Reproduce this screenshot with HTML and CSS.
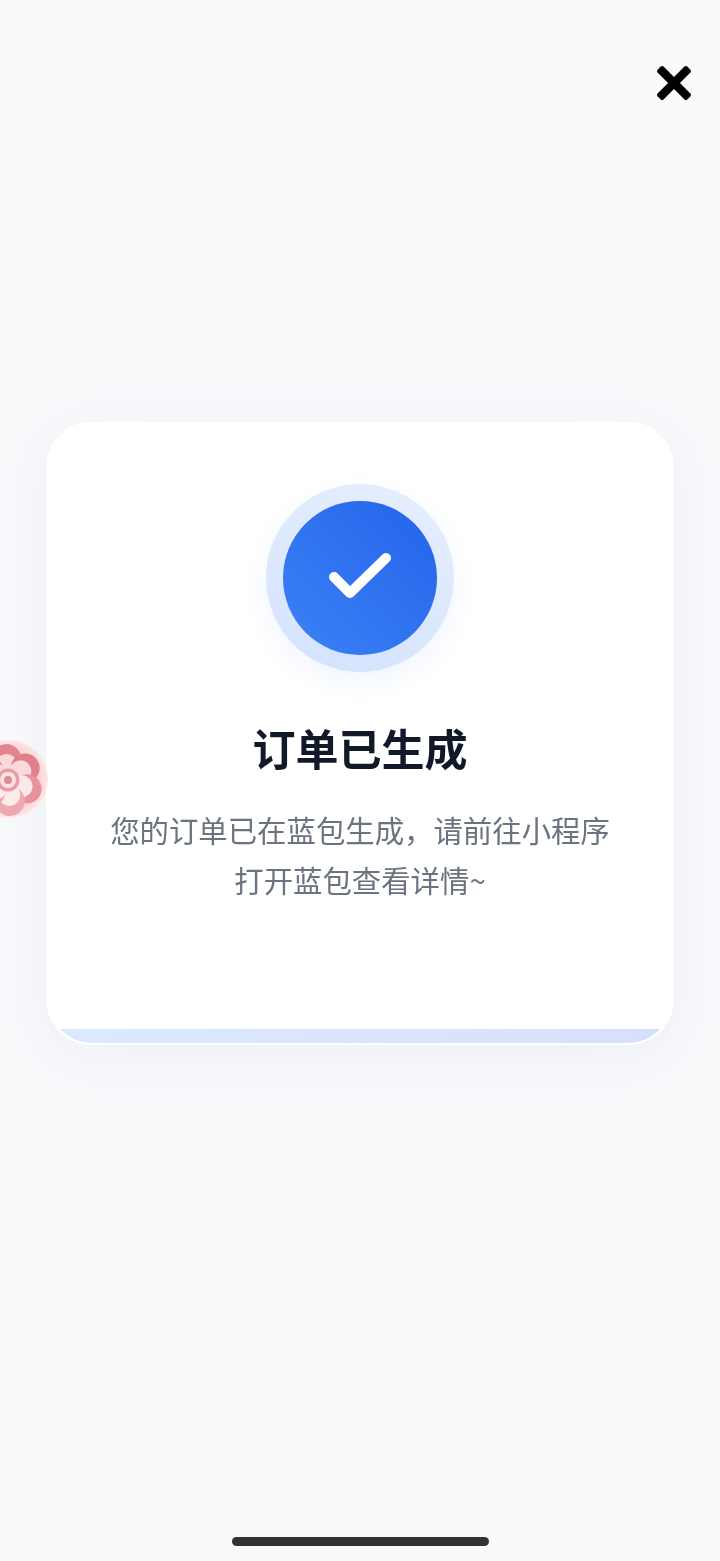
FILE: index.html
```html
<!DOCTYPE html>
<html lang="zh-CN">
<head>
    <meta charset="UTF-8">
    <meta name="viewport" content="width=device-width, initial-scale=1.0">
    <title>订单已生成</title>
    <link rel="stylesheet" href="styles.css">
</head>
<body>

    <div class="page">
        <div class="topbar">
            <svg class="close-icon" viewBox="0 0 36 36" width="36" height="36">
                <g transform="translate(18 18)">
                    <rect x="-21" y="-4.2" width="42" height="8.4" rx="2" transform="rotate(45)"/>
                    <rect x="-21" y="-4.2" width="42" height="8.4" rx="2" transform="rotate(-45)"/>
                </g>
            </svg>
        </div>

        <div class="card">
            <div class="status">
                <div class="status__circle">
                    <svg viewBox="0 0 64 50" width="64" height="50">
                        <path d="M6 24 L22 40 L58 5" fill="none" stroke="#fff" stroke-width="10" stroke-linecap="round" stroke-linejoin="round"/>
                    </svg>
                </div>
            </div>
            <h2 class="card__title">订单已生成</h2>
            <p class="card__text">您的订单已在蓝包生成，请前往小程序<br>打开蓝包查看详情~</p>
            <div class="card__footer"></div>
        </div>

        <div class="home-bar"></div>

        <!-- floating flower button on the left edge -->
        <div class="float-flower">
            <svg viewBox="0 0 78 78" width="78" height="78">
                <defs>
                    <radialGradient id="flowerBg">
                        <stop offset="0.7" stop-color="#fbcfd2"/>
                        <stop offset="1" stop-color="#fde6e7"/>
                    </radialGradient>
                </defs>
                <circle cx="39" cy="39" r="39" fill="url(#flowerBg)"/>
                <g transform="translate(38 40)">
                    <g transform="rotate(-5)"><circle cy="-21" r="15" fill="#e2858f"/><circle cy="-15" r="11" fill="#fbd8da"/></g>
                    <g transform="rotate(55)"><circle cy="-21" r="14.5" fill="#e0808c"/><circle cy="-15" r="11" fill="#fbd8da"/></g>
                    <g transform="rotate(115)"><circle cy="-21" r="14.5" fill="#e8929b"/><circle cy="-15" r="11" fill="#fde8e9"/></g>
                    <g transform="rotate(175)"><circle cy="-21" r="15" fill="#eca9b1"/><circle cy="-15" r="11" fill="#fdeaeb"/></g>
                    <g transform="rotate(235)"><circle cy="-21" r="14.5" fill="#eca9b1"/><circle cy="-15" r="11" fill="#fdeaeb"/></g>
                    <g transform="rotate(295)"><circle cy="-21" r="14.5" fill="#e2858f"/><circle cy="-15" r="11" fill="#fbd8da"/></g>
                    <circle r="11.5" fill="#e89ea7"/>
                    <circle r="8" fill="#fbe3e4"/>
                    <circle r="4" fill="#e08a94"/>
                </g>
            </svg>
        </div>
    </div>

</body>
</html>
```

FILE: styles.css
```css
* {
    margin: 0;
    padding: 0;
    box-sizing: border-box;
}

html, body {
    height: 100%;
}

body {
    background: #f9fafc;
    font-family: "Noto Sans CJK SC", "Noto Sans", sans-serif;
    overflow: hidden;
}

.page {
    position: relative;
    display: flex;
    flex-direction: column;
    height: 1561px;
    padding: 0 46px;
}

.topbar {
    display: flex;
    justify-content: flex-end;
    height: 422px;
    padding-top: 65px;
    margin-right: -18px;
}

.close-icon {
    display: block;
}

.card {
    position: relative;
    display: flex;
    flex-direction: column;
    align-items: center;
    height: 623px;
    padding-top: 60px;
    background: #fff;
    border: 2px solid #fff;
    border-radius: 46px;
    overflow: hidden;
    filter: drop-shadow(0 10px 30px rgba(30, 50, 90, 0.06));
}

.status {
    display: flex;
    align-items: center;
    justify-content: center;
    width: 188px;
    height: 188px;
    border-radius: 50%;
    background: linear-gradient(20deg, #d3e2fd, #e6effe);
    box-shadow: 0 10px 24px rgba(59, 130, 246, 0.08);
}

.status__circle {
    display: flex;
    align-items: center;
    justify-content: center;
    width: 154px;
    height: 154px;
    border-radius: 50%;
    background: linear-gradient(45deg, #3b82f6, #2563eb);
}

.card__title {
    margin-top: 44px;
    font-size: 43px;
    line-height: 62px;
    font-weight: 700;
    color: #111827;
}

.card__text {
    margin-top: 26px;
    font-size: 29.4px;
    line-height: 50px;
    text-align: center;
    color: #6b7280;
}

.card__footer {
    position: absolute;
    left: 0;
    right: 0;
    bottom: 0;
    height: 14px;
    background: linear-gradient(90deg, #dbeafe, #d6e0fb);
}

.home-bar {
    width: 257px;
    height: 9px;
    margin: auto auto 15px;
    border-radius: 5px;
    background: #333;
}

.float-flower {
    position: absolute;
    left: -30px;
    top: 740px;
    width: 78px;
    height: 78px;
    filter: blur(0.5px);
}
```
